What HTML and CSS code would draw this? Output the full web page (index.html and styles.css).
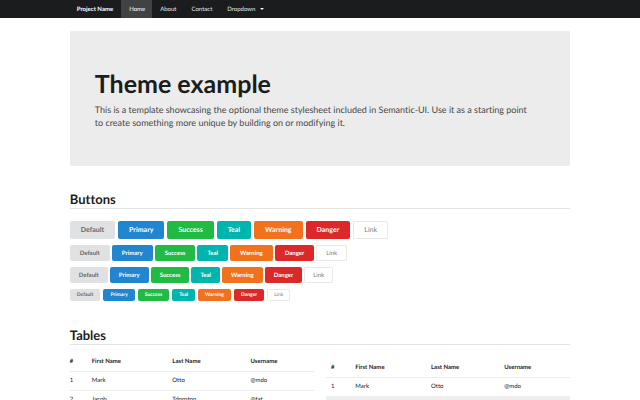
FILE: index.html
```html
<!DOCTYPE html>
<html lang="en">
<head>
<meta charset="utf-8">
<title>Theme example</title>
<link rel="stylesheet" href="styles.css">
</head>
<body>
<nav class="navbar">
  <div class="container menu">
    <a class="item brand" href="#">Project Name</a>
    <a class="item active" href="#">Home</a>
    <a class="item" href="#">About</a>
    <a class="item" href="#">Contact</a>
    <a class="item dropdown" href="#">Dropdown <svg class="caret" viewBox="0 0 4 2" aria-hidden="true"><path d="M0 0h4L2 2z"/></svg></a>
  </div>
</nav>
<main class="container">
  <header class="hero">
    <h1>Theme example</h1>
    <p>This is a template showcasing the optional theme stylesheet included in Semantic-UI. Use it as a starting point to create something more unique by building on or modifying it.</p>
  </header>
  <section>
    <h2>Buttons</h2>
    <div class="buttons large">
      <button class="button">Default</button>
      <button class="button primary">Primary</button>
      <button class="button success">Success</button>
      <button class="button teal">Teal</button>
      <button class="button warning">Warning</button>
      <button class="button danger">Danger</button>
      <button class="button basic">Link</button>
    </div>
    <div class="buttons medium">
      <button class="button">Default</button>
      <button class="button primary">Primary</button>
      <button class="button success">Success</button>
      <button class="button teal">Teal</button>
      <button class="button warning">Warning</button>
      <button class="button danger">Danger</button>
      <button class="button basic">Link</button>
    </div>
    <div class="buttons small">
      <button class="button">Default</button>
      <button class="button primary">Primary</button>
      <button class="button success">Success</button>
      <button class="button teal">Teal</button>
      <button class="button warning">Warning</button>
      <button class="button danger">Danger</button>
      <button class="button basic">Link</button>
    </div>
    <div class="buttons mini">
      <button class="button">Default</button>
      <button class="button primary">Primary</button>
      <button class="button success">Success</button>
      <button class="button teal">Teal</button>
      <button class="button warning">Warning</button>
      <button class="button danger">Danger</button>
      <button class="button basic">Link</button>
    </div>
  </section>
  <section class="tables">
    <h2>Tables</h2>
    <div class="columns">
      <table class="plain">
        <thead><tr><th class="num">#</th><th class="first">First Name</th><th class="last">Last Name</th><th>Username</th></tr></thead>
        <tbody>
          <tr><td>1</td><td>Mark</td><td>Otto</td><td>@mdo</td></tr>
          <tr><td>2</td><td>Jacob</td><td>Tdornton</td><td>@fat</td></tr>
        </tbody>
      </table>
      <table class="striped">
        <thead><tr><th class="num">#</th><th class="first">First Name</th><th class="last">Last Name</th><th>Username</th></tr></thead>
        <tbody>
          <tr><td>1</td><td>Mark</td><td>Otto</td><td>@mdo</td></tr>
          <tr><td>2</td><td>Jacob</td><td>Tdornton</td><td>@fat</td></tr>
        </tbody>
      </table>
    </div>
  </section>
</main>
</body>
</html>
```
FILE: styles.css
```css
* { box-sizing: border-box; }
html { height: 100%; overflow: hidden; }
body {
  height: 100%;
  margin: 0;
  overflow: hidden;
  background: #fff;
  color: #222;
  font: 6px/9px Lato, sans-serif;
  font-variant-ligatures: none;
  text-rendering: geometricPrecision;
}
.container { width: 78.2%; margin: 0 auto; }
.navbar { background: #1b1c1d; }
.menu { display: flex; }
.item {
  display: flex;
  align-items: center;
  height: 18px;
  padding: 0 7px 0 8px;
  color: #e6e6e6;
  text-decoration: none;
}
.brand { padding: 0 8px 0 7px; color: #fff; font-weight: 700; }
.active { background: #414243; color: #fff; }
.caret { width: 4px; height: 2px; margin-left: 5px; fill: #fff; }
.hero {
  margin-top: 13px;
  padding: 37px 37px 37px 25px;
  border-radius: 1px;
  background: #ececec;
}
h1 { margin: 0; font-size: 25px; line-height: 32px; color: #1b1c1d; }
.hero p { margin: 3px 0 0; font-size: 9px; line-height: 13px; color: #484848; }
h2 {
  margin: 25px 0 12px;
  padding-bottom: 1px;
  border-bottom: 1px solid #e4e4e5;
  font-size: 13px;
  line-height: 16px;
  color: #1b1c1d;
}
.buttons { display: flex; gap: 3px; }
.button {
  padding: 1px 9px 0;
  border: 0;
  border-radius: 2px;
  background: #e0e1e2;
  color: #666768;
  font: 700 6px/1 Lato, sans-serif;
  text-rendering: inherit;
}
.large { margin-bottom: 6px; }
.large .button { height: 18px; padding: 1px 11px 0; font-size: 7px; }
.medium { gap: 2px; margin-bottom: 6px; }
.medium .button { height: 16px; padding: 1px 10px 0; }
.small { gap: 2px; margin-bottom: 6px; }
.small .button { height: 16px; }
.mini .button { height: 12px; padding: 0 7px; font-size: 5px; }
.button.primary { background: #2185d0; color: #fff; }
.button.success { background: #21ba45; color: #fff; }
.button.teal { background: #00b5ad; color: #fff; }
.button.warning { background: #f2711c; color: #fff; }
.button.danger { background: #db2828; color: #fff; }
.button.basic { box-shadow: inset 0 0 0 1px #e8e8e9; background: #fff; color: #7b7b7b; font-weight: 400; }
.tables h2 { margin: 26px 0 7px; }
.columns { display: grid; grid-template-columns: 1fr 1fr; gap: 12px; align-items: start; }
table { width: 100%; border-collapse: collapse; table-layout: fixed; }
th, td { height: 19px; padding: 0; border-bottom: 1px solid #ececec; text-align: left; }
.num { width: 9%; }
.first { width: 33%; }
.last { width: 32%; }
.striped { margin-top: 6px; }
.striped .num { width: 12%; }
.striped .first { width: 31%; }
.striped .last { width: 30%; }
.striped th:first-child, .striped td:first-child { padding-left: 5px; }
.striped tbody tr:nth-child(even) { background: #eee; }
```
